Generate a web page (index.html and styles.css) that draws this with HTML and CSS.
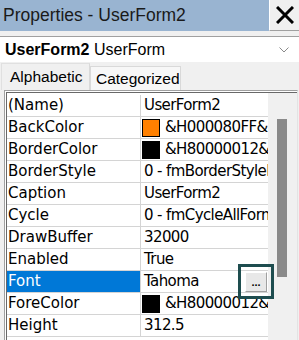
FILE: index.html
```html
<!DOCTYPE html>
<html lang="en">
<head>
    <meta charset="UTF-8">
    <title>Properties - UserForm2</title>
    <link rel="stylesheet" href="styles.css">
</head>
<body>
    <div class="window">
        <header class="titlebar">
            <span class="title">Properties - UserForm2</span>
            <button class="close-btn">
                <svg width="18" height="18" viewBox="0 0 18 18">
                    <path d="M1 1 L17 17 M17 1 L1 17" stroke="#000" stroke-width="3" fill="none"/>
                </svg>
            </button>
        </header>

        <div class="object-bar">
            <span><b>UserForm2</b> UserForm</span>
            <svg class="chevron" width="10" height="6" viewBox="0 0 10 6">
                <path d="M0.5 0.5 L5 5 L9.5 0.5" stroke="#8a8a8a" stroke-width="1" fill="none"/>
            </svg>
        </div>

        <div class="tabs">
            <div class="tab active">Alphabetic</div>
            <div class="tab">Categorized</div>
        </div>

        <div class="grid">
            <div class="grid-inner">
                <div class="rows">
                    <div class="row"><div class="name">(Name)</div><div class="value">UserForm2</div></div>
                    <div class="row"><div class="name">BackColor</div><div class="value"><span class="swatch orange"></span>&amp;H000080FF&amp;</div></div>
                    <div class="row"><div class="name">BorderColor</div><div class="value"><span class="swatch black"></span>&amp;H80000012&amp;</div></div>
                    <div class="row"><div class="name">BorderStyle</div><div class="value">0 - fmBorderStyleNone</div></div>
                    <div class="row"><div class="name">Caption</div><div class="value">UserForm2</div></div>
                    <div class="row"><div class="name">Cycle</div><div class="value">0 - fmCycleAllForms</div></div>
                    <div class="row"><div class="name">DrawBuffer</div><div class="value">32000</div></div>
                    <div class="row"><div class="name">Enabled</div><div class="value">True</div></div>
                    <div class="row selected">
                        <div class="name">Font</div>
                        <div class="value">Tahoma<button class="dots-btn">...</button></div>
                    </div>
                    <div class="row"><div class="name">ForeColor</div><div class="value"><span class="swatch black"></span>&amp;H80000012&amp;</div></div>
                    <div class="row"><div class="name">Height</div><div class="value">312.5</div></div>
                </div>
                <div class="scrollbar">
                    <div class="thumb"></div>
                </div>
            </div>
        </div>

        <div class="callout"></div>
    </div>
</body>
</html>
```

FILE: styles.css
```css
* {
    margin: 0;
    padding: 0;
    box-sizing: border-box;
}

body {
    background-color: #f0f0f0;
    font-family: 'Liberation Sans', Arial, sans-serif;
    font-size: 16px;
    color: #000;
}

.window {
    position: relative;
    width: 299px;
    height: 340px;
    overflow: hidden;
}

.titlebar {
    height: 31px;
    background-color: #99b4d1;
    display: flex;
    justify-content: space-between;
    align-items: center;
}

.title {
    padding-left: 3px;
    font-size: 17.5px;
    color: #1a1a1a;
}

.close-btn {
    width: 30px;
    height: 31px;
    background-color: #f0f0f0;
    border: none;
    border-bottom: 1px solid #a0a0a0;
    border-left: 1px solid #ffffff;
    display: flex;
    align-items: center;
    justify-content: center;
}

.object-bar {
    margin-top: 5px;
    height: 26px;
    background-color: #fff;
    border-top: 1px solid #a0a0a0;
    display: flex;
    align-items: center;
    justify-content: space-between;
    padding: 0 10px 0 5px;
}

.chevron {
    margin-top: 1px;
}

.tabs {
    display: flex;
    align-items: flex-end;
    height: 28px;
    padding-left: 1px;
}

.tab {
    height: 24px;
    padding: 0 5px;
    border: 1px solid #d9d9d9;
    border-bottom: none;
    background-color: #f7f7f7;
    display: flex;
    align-items: center;
    font-size: 15.5px;
    white-space: nowrap;
}

.tab.active {
    height: 27px;
    width: 89px;
    padding-left: 8px;
    background-color: #f0f0f0;
    border-color: #e0e0e0;
    border-right-color: #d9d9d9;
}

.tab + .tab {
    width: 91px;
}

.grid {
    margin-left: 4px;
    margin-right: 1px;
    height: 260px;
    border-top: 1px solid #a0a0a0;
    border-left: 1px solid #a0a0a0;
    border-right: 1px solid #e3e3e3;
    padding: 1px 0 0 1px;
    background-color: #fff;
}

.grid-inner {
    height: 100%;
    border-top: 1px solid #696969;
    border-left: 1px solid #696969;
    display: flex;
    font-family: 'DejaVu Sans', Verdana, sans-serif;
    font-size: 15px;
}

.rows {
    width: 261px;
    padding-top: 2px;
    background-color: #fff;
}

.row {
    display: flex;
    height: 22px;
    border-bottom: 1px solid #d4d4d4;
}

.name {
    width: 134px;
    padding-left: 1px;
    border-right: 1px solid #d4d4d4;
    line-height: 21px;
    white-space: nowrap;
}

.value {
    flex: 1;
    padding-left: 3px;
    line-height: 21px;
    letter-spacing: -0.6px;
    white-space: nowrap;
    overflow: hidden;
    display: flex;
    align-items: center;
}

.row.selected .name {
    background-color: #0078d7;
    color: #fff;
}

.swatch {
    width: 18px;
    height: 18px;
    margin-left: -2px;
    margin-right: 5px;
    border: 1px solid #000;
    flex-shrink: 0;
}

.swatch.orange {
    background-color: #ff8000;
}

.swatch.black {
    background-color: #000;
}

.dots-btn {
    margin-left: auto;
    margin-right: 1px;
    width: 22px;
    height: 20px;
    background-color: #e8e8e8;
    border: 1px solid #fff;
    border-right-color: #a0a0a0;
    border-bottom-color: #a0a0a0;
    font-family: 'Liberation Sans', Arial, sans-serif;
    font-size: 11px;
    font-weight: bold;
    line-height: 12px;
    letter-spacing: 0;
    color: #000;
}

.scrollbar {
    flex: 1;
    background-color: #f0f0f0;
    padding: 26px 0 0 9px;
}

.thumb {
    width: 10px;
    height: 158px;
    background-color: #8a8a8a;
}

.callout {
    position: absolute;
    left: 238px;
    top: 264px;
    width: 36px;
    height: 35px;
    border: 3px solid #1e4d4f;
}
```
